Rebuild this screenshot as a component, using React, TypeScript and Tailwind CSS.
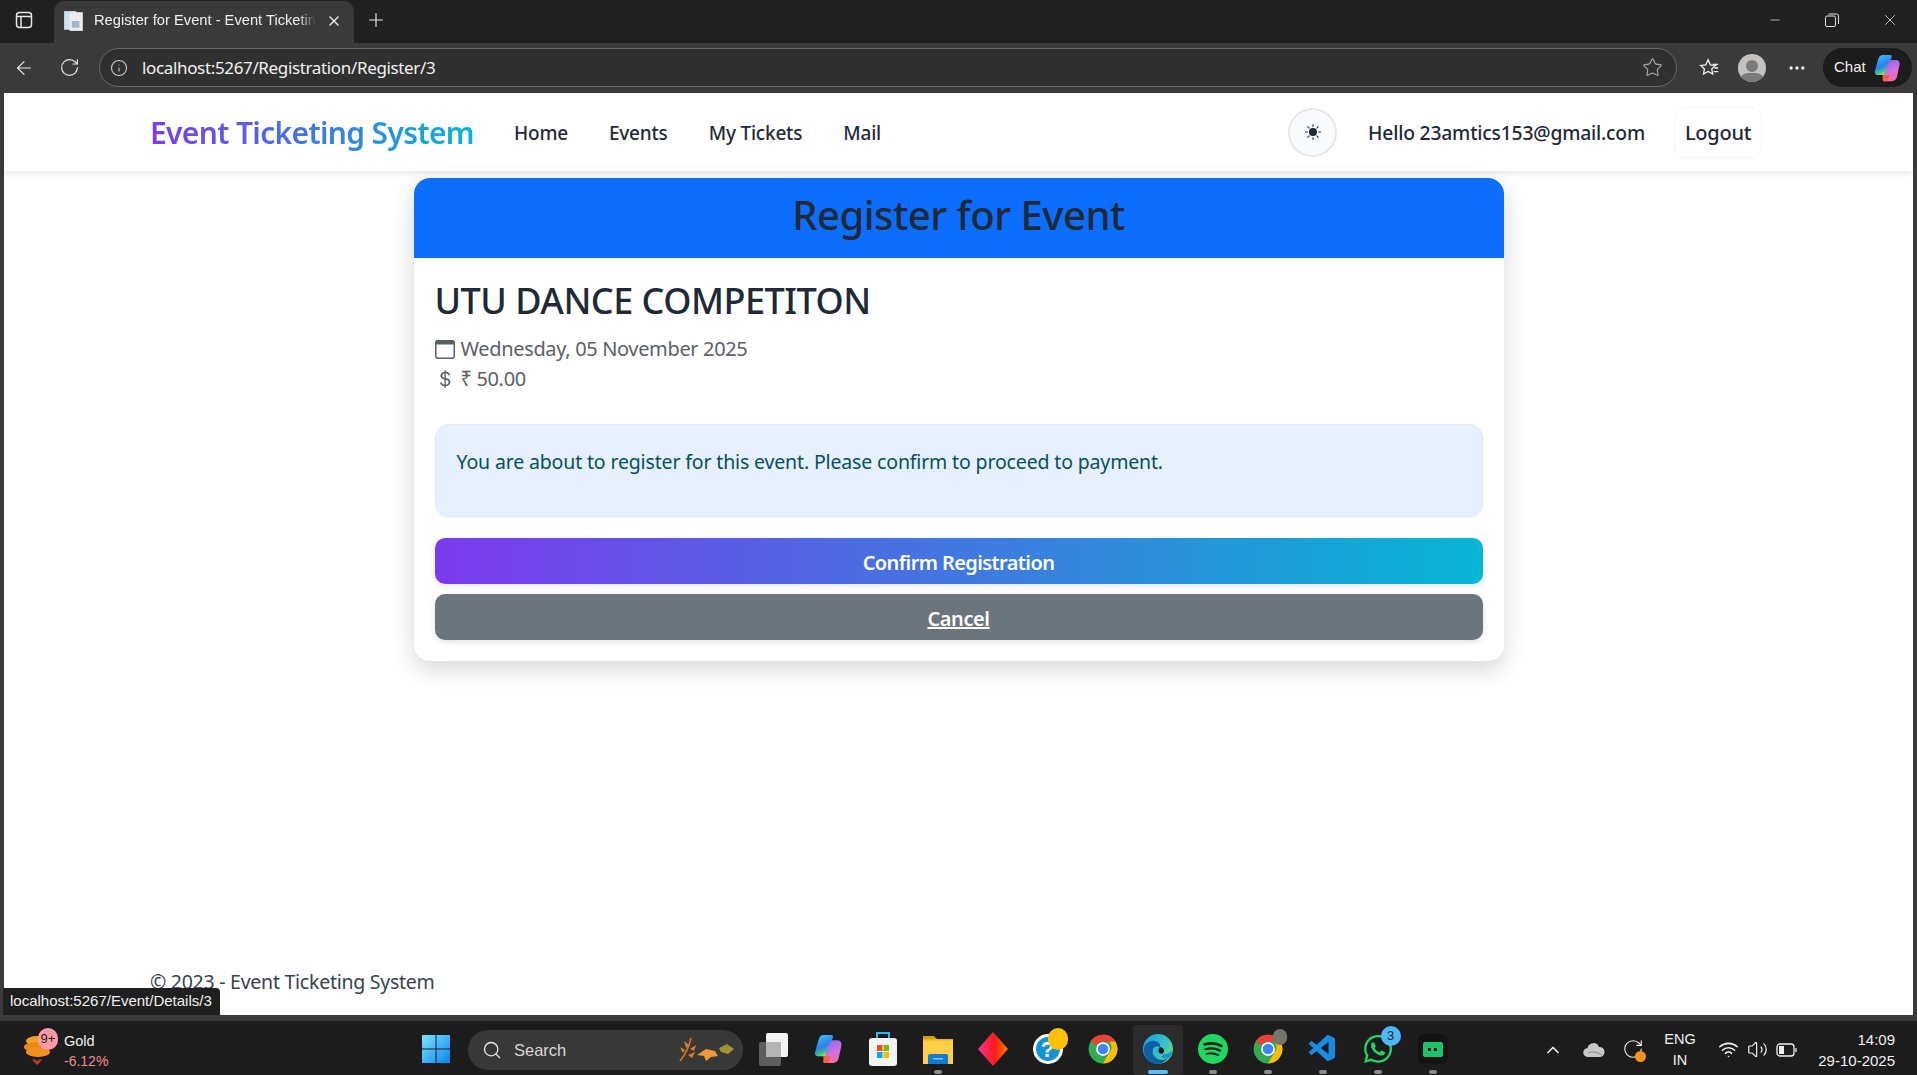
import React from 'react';
import { ArrowLeft, RotateCw, Info, Star, Plus, X, Minus, Search, ChevronUp, Wifi, Volume2, MoreHorizontal } from 'lucide-react';
import { BsCurrencyDollar, BsSunFill } from 'react-icons/bs';
import { FaWhatsapp } from 'react-icons/fa';
import { VscVscode } from 'react-icons/vsc';

const font = 'font-["Noto_Sans","Open_Sans",sans-serif]';

function CopilotIcon({ size = 26, id = 'cp' }: { size?: number; id?: string }) {
  return (
    <svg width={size} height={size} viewBox="0 0 24 24">
      <defs>
        <linearGradient id={`${id}A`} x1="0.2" y1="0" x2="0.6" y2="1">
          <stop offset="0" stopColor="#35c6f4" />
          <stop offset="0.55" stopColor="#2f7cf0" />
          <stop offset="0.8" stopColor="#37c58a" />
          <stop offset="1" stopColor="#f5d33c" />
        </linearGradient>
        <linearGradient id={`${id}B`} x1="0.3" y1="0" x2="0.7" y2="1">
          <stop offset="0" stopColor="#7c6cf0" />
          <stop offset="0.55" stopColor="#d86ee0" />
          <stop offset="1" stopColor="#f0709c" />
        </linearGradient>
      </defs>
      <path d="M8.500 1.500h6c1 0 1.500.7 1.200 1.700L12 15c-.6 1.800-1.500 2.500-3 2.500H4.500C2.800 17.500 1.800 16 2.300 14.300L5 5c.6-2.200 1.700-3.500 3.500-3.500z" fill={`url(#${id}A)`} />
      <path d="M15.500 5.500h3.500c2.200 0 3.400 1.600 3 3.800l-1.800 8.900c-.5 2.600-2 4.300-4.500 4.300h-6c-1 0-1.300-.8-1-1.700l3.500-11.300c.5-1.500.6-4 2.800-4z" fill={`url(#${id}B)`} />
      <path d="M8.500 17.500H14l-1.600 5h-2.800c-1 0-1.300-.8-1-1.700z" fill="#f5643c" />
    </svg>
  );
}

function ChromeIcon({ size = 30 }: { size?: number }) {
  return (
    <svg width={size} height={size} viewBox="0 0 48 48">
      <circle cx="24" cy="24" r="23" fill="#34a853" />
      <path d="M24 1a23 23 0 0 1 20 11.500H24a11.500 11.500 0 0 0-10 5.800L4.100 12.500A23 23 0 0 1 24 1z" fill="#ea4335" />
      <path d="M44 12.500A23 23 0 0 1 24 47l10-17.500a11.500 11.500 0 0 0 0-17z" fill="#fbbc04" />
      <circle cx="24" cy="24" r="11" fill="#fff" />
      <circle cx="24" cy="24" r="8.500" fill="#4285f4" />
    </svg>
  );
}

function EdgeIcon() {
  return (
    <svg width="32" height="32" viewBox="0 0 32 32">
      <defs>
        <linearGradient id="edA" x1="0" y1="0" x2="1" y2="0.6">
          <stop offset="0" stopColor="#1b9de2" />
          <stop offset="0.7" stopColor="#35c1c8" />
          <stop offset="1" stopColor="#6fdc6a" />
        </linearGradient>
      </defs>
      <circle cx="16" cy="16" r="15" fill="url(#edA)" />
      <path d="M2 15c1-5 6-8 11-7 4 .8 6 4 5 6-2-1.500-6-1-7 2-1.200 4 1 9 6 10.500 3 .9 6 .4 9-1.500-3 4-7 6-11 6C7 31 1 24 2 15z" fill="#0f5ea8" />
      <path d="M18 14c3 .5 5 3 3.500 5.500-1.500 2-4.500 1.500-5-1-.4-2 .5-3.500 1.500-4.500z" fill="#1b1b1b" />
      <path d="M21 21c3 .5 6-.5 9-4 .5 3-1 6-3 8-3 1-6 .5-8-1 1-.5 1.500-1.500 2-3z" fill="#1f8fe0" />
    </svg>
  );
}

function TaskIcon({ children, dot, active }: { children: React.ReactNode; dot?: boolean; active?: boolean }) {
  return (
    <div className="relative flex h-[50px] w-[55px] items-center justify-center pb-[2px]">
      {active && <div className="absolute inset-y-0 left-[3px] right-[2px] rounded-[4px] bg-[#2b2b2b]" />}
      <div className="relative flex items-center justify-center">{children}</div>
      {dot && <span className="absolute bottom-[1px] left-1/2 h-[4px] w-[8px] -translate-x-1/2 rounded-full bg-[#8a8a8a]" />}
      {active && <span className="absolute bottom-[1px] left-1/2 h-[4px] w-[20px] -translate-x-1/2 rounded-full bg-[#4cc2ff]" />}
    </div>
  );
}

function BrowserChrome() {
  return (
    <>
      <div className="flex h-[43px] bg-[#202020] text-white">
        <div className="flex h-[40px] w-[54px] items-center justify-center pr-[6px]">
          <svg width="18" height="18" viewBox="0 0 18 18" fill="none" stroke="#e8e8e8" strokeWidth="1.500">
            <rect x="1.500" y="1.500" width="15" height="15" rx="3" />
            <path d="M1.500 5.500h15M6 5.500v11" />
          </svg>
        </div>
        <div className="mt-[1px] flex h-[42px] w-[300px] items-center rounded-t-[10px] bg-[#3a3a3a] pb-[3px] pl-[9px] pr-[12px]">
          <svg width="22" height="22" viewBox="0 0 20 20" className="shrink-0">
            <rect x="1" y="1" width="11" height="17" fill="#cfe0ef" />
            <rect x="6" y="2" width="12" height="17" fill="#e9edf2" />
            <rect x="8" y="10" width="7" height="6" fill="#9fb6cc" />
          </svg>
          <span className="ml-[9px] whitespace-nowrap text-[14.700px] text-[#f0f0f0] font-['Liberation_Sans',sans-serif] [mask-image:linear-gradient(to_right,black_92%,transparent)]">
            Register for Event - Event Ticketin
          </span>
          <X size={16} className="ml-auto text-[#e8e8e8]" />
        </div>
        <div className="flex h-[40px] w-[44px] items-center justify-center">
          <Plus size={22} strokeWidth={1.3} className="text-[#e8e8e8]" />
        </div>
        <div className="ml-auto flex h-[40px] items-center text-[#e0e0e0]">
          <div className="flex w-[57px] justify-center"><Minus size={14} strokeWidth={1.3} /></div>
          <div className="flex w-[57px] justify-center">
            <svg width="14" height="14" viewBox="0 0 14 14" fill="none" stroke="#e0e0e0" strokeWidth="1">
              <rect x="0.500" y="3" width="10" height="10.500" rx="1.500" />
              <path d="M3.500 1h8a2 2 0 0 1 2 2v8" />
            </svg>
          </div>
          <div className="flex w-[57px] justify-center pl-[2px]"><X size={18} strokeWidth={1.1} /></div>
        </div>
      </div>
      <div className="flex h-[50px] items-center bg-[#3a3a3a] pb-[1px] text-[#e8e8e8]">
        <div className="flex w-[46px] justify-center pl-[1px]"><ArrowLeft size={22} strokeWidth={1.3} /></div>
        <div className="flex w-[46px] justify-center"><RotateCw size={21} strokeWidth={1.3} /></div>
        <div className="ml-[7px] flex h-[39px] w-[1578px] items-center rounded-full border border-[#6a6a6a] bg-[#303030] pl-[10px] pr-[13px]">
          <Info size={18} strokeWidth={1.4} className="text-[#d0d0d0]" />
          <span className={`ml-[14px] text-[17px] tracking-[-0.35px] text-[#f2f2f2] ${font}`}>localhost:5267/Registration/Register/3</span>
          <Star size={21} strokeWidth={1.2} className="ml-auto text-[#b0b0b0]" />
        </div>
        <div className="flex w-[61px] justify-center pl-[2px]">
          <svg width="22" height="22" viewBox="0 0 24 24" fill="none" stroke="#f0f0f0" strokeWidth="1.400">
            <path d="M11 3l2.500 5.500 5.500.7-4 3.800 1 5.500-5-2.800-5 2.800 1-5.500-4-3.800 5.500-.7z" />
            <path d="M16 8h6M18 12h4M17 16h5" />
          </svg>
        </div>
        <div className="relative h-[28px] w-[28px] overflow-hidden rounded-full bg-[#c4c3c0]">
          <div className="absolute left-1/2 top-[6px] h-[12px] w-[12px] -translate-x-1/2 rounded-full bg-[#7b7a78]" />
          <div className="absolute left-1/2 top-[19px] h-[16px] w-[24px] -translate-x-1/2 rounded-full bg-[#7b7a78]" />
        </div>
        <div className="flex w-[57px] justify-center pl-[4px]"><MoreHorizontal size={20} strokeWidth={2} className="text-[#f0f0f0]" /></div>
        <div className="flex h-[39px] w-[89px] items-center gap-[6px] rounded-full bg-[#1c1c1c] pl-[11px]">
          <span className="text-[15px] text-[#f0f0f0] font-['Liberation_Sans',sans-serif]">Chat</span>
          <CopilotIcon size={30} id="cpChat" />
        </div>
      </div>
    </>
  );
}

function NavBar() {
  return (
    <nav className="flex h-[78px] shrink-0 items-center bg-white pl-[146px] pr-[152px] shadow-[0_2px_6px_rgba(0,0,0,0.10)]">
      <span className="bg-[linear-gradient(to_right,#7c3aed,#06b6d4)] bg-clip-text text-[30px] font-semibold tracking-[-0.65px] text-transparent">
        Event Ticketing System
      </span>
      <div className="ml-[40px] mt-[2px] flex gap-[41px] text-[19px] font-medium tracking-[-0.2px] text-[#1f2937]">
        <span>Home</span>
        <span>Events</span>
        <span>My Tickets</span>
        <span>Mail</span>
      </div>
      <div className="ml-auto flex h-[49px] w-[49px] items-center justify-center rounded-full border-2 border-[#e5e7eb] bg-[#f9fafb] text-[#1f2937]">
        <BsSunFill size={16} />
      </div>
      <span className="ml-[31px] mt-[2px] text-[19.300px] font-medium tracking-[-0.2px] text-[#1f2937]">Hello 23amtics153@gmail.com</span>
      <div className="ml-[30px] flex h-[49px] w-[86px] items-center justify-center rounded-[10px] bg-white pt-[2px] text-[20px] font-medium tracking-[-0.25px] text-[#1f2937] shadow-[0_0_3px_rgba(0,0,0,0.07)]">
        Logout
      </div>
    </nav>
  );
}

function RegisterCard() {
  return (
    <div className="mx-auto mt-[7px] w-[1090px] overflow-hidden rounded-[16px] bg-white shadow-[0_8px_24px_rgba(0,0,0,0.16)]">
      <div className="flex h-[80px] items-center justify-center bg-[#0d6efd] pb-[7px] text-[40px] font-medium tracking-[-0.5px] text-[#1f2937]">
        Register for Event
      </div>
      <div className="px-[21px] pb-[21px] pt-[22px]">
        <h3 className="h-[42px] text-[36px] font-medium leading-[42px] tracking-[-0.5px] text-[#1f2937]">UTU DANCE COMPETITON</h3>
        <div className="mt-[12px] text-[20px] leading-[30px] tracking-[-0.35px] text-[#5b6167]">
          <div className="flex items-center">
            <svg width="20" height="20" viewBox="0 0 20 20" fill="none">
              <rect x="0.750" y="1.750" width="18.500" height="17.500" rx="2.200" stroke="currentColor" strokeWidth="1.500" />
              <path d="M3 1h14a2.500 2.500 0 0 1 2.500 2.500V5.500H.500V3.500A2.500 2.500 0 0 1 3 1z" fill="currentColor" />
            </svg>
            <span className="ml-[6px]">Wednesday, 05 November 2025</span>
          </div>
          <div className="flex items-center">
            <BsCurrencyDollar size={20} />
            <span className="ml-[6px]">₹ 50.00</span>
          </div>
        </div>
        <div className="mt-[30px] h-[93px] rounded-[14px] border border-[#dfe9f7] bg-[#e6f0fe] pl-[21px] pr-[20px] pt-[22px] text-[19.500px] leading-[30px] tracking-[-0.15px] text-[#055160] shadow-[0_1px_3px_rgba(0,0,0,0.05)]">
          You are about to register for this event. Please confirm to proceed to payment.
        </div>
        <button className="mt-[21px] flex h-[46px] w-full items-center justify-center rounded-[10px] bg-[linear-gradient(to_right,#7c3aed,#06b6d4)] pt-[4px] text-[20px] font-semibold tracking-[-0.6px] text-white shadow-[0_2px_6px_rgba(0,0,0,0.12)]">
          Confirm Registration
        </button>
        <button className="mt-[10px] flex h-[46px] w-full items-center justify-center rounded-[10px] bg-[#6c757d] pt-[4px] text-[20px] font-semibold tracking-[-0.4px] text-white underline shadow-[0_2px_6px_rgba(0,0,0,0.12)]">
          Cancel
        </button>
      </div>
    </div>
  );
}

function Taskbar() {
  return (
    <div className="flex h-[54px] items-end bg-[#1c1c1c] text-white">
      <div className="relative h-full w-[408px] shrink-0">
        <svg width="30" height="36" viewBox="0 0 30 36" className="absolute left-[22px] top-[12px]">
          <ellipse cx="15" cy="8" rx="11" ry="5" fill="#f0a12a" />
          <ellipse cx="14" cy="14" rx="12" ry="5" fill="#e8891a" />
          <ellipse cx="16" cy="19" rx="12" ry="5" fill="#f09020" />
          <path d="M10 27l5 5 5-5-2-1-3 2-3-2z" fill="#c0391b" />
        </svg>
        <span className="absolute left-[38px] top-[7px] flex h-[22px] w-[20px] items-center justify-center rounded-full bg-[#ff9aa2] text-[13px] text-[#1c1c1c] font-['Liberation_Sans',sans-serif]">9+</span>
        <span className="absolute left-[64px] top-[10px] text-[14.500px] text-[#f0f0f0] font-['Liberation_Sans',sans-serif]">Gold</span>
        <span className="absolute left-[64px] top-[30px] text-[14px] text-[#f28b92] font-['Liberation_Sans',sans-serif]">-6.12%</span>
      </div>
      <div className="flex h-[50px] w-[55px] items-center justify-center pb-[2px]">
        <svg width="30" height="30" viewBox="0 0 30 30">
          <defs>
            <linearGradient id="winA" x1="0" y1="0" x2="1" y2="1">
              <stop offset="0" stopColor="#7be3ff" />
              <stop offset="1" stopColor="#0a84f0" />
            </linearGradient>
          </defs>
          <path d="M1 1h13.500v13.500H1zM15.500 1H29v13.500H15.500zM1 15.500h13.500V29H1zM15.500 15.500H29V29H15.500z" fill="url(#winA)" />
        </svg>
      </div>
      <div className="mb-[5px] ml-[5px] flex h-[40px] w-[275px] items-center rounded-full bg-[#383838] pl-[14px] pr-[6px]">
        <Search size={20} strokeWidth={1.6} className="text-[#e8e8e8]" />
        <span className="ml-[12px] pt-[1px] text-[16.500px] text-[#d8d8d8] font-['Liberation_Sans',sans-serif]">Search</span>
        <svg width="60" height="30" viewBox="0 0 60 30" className="ml-auto">
          <path d="M3 26C8 20 12 12 14 3" stroke="#d87a24" strokeWidth="1.500" fill="none" />
          <path d="M6 18l-3-6 5 3zM9 13l-2-7 5 4zM13 14l6-4-2 6zM11 20l7-3-3 6z" fill="#e0812a" />
          <path d="M20 20l9-6 9 2 3 5-7 1-5 4-2-5z" fill="#ee9a3c" />
          <path d="M42 13l8-4 7 5-6 5-7-2z" fill="#9c9530" />
        </svg>
      </div>
      <div className="ml-[2px] flex">
        <TaskIcon>
          <svg width="30" height="34" viewBox="0 0 30 34">
            <rect x="1" y="10" width="22" height="24" rx="2" fill="#5e5e5e" />
            <rect x="8" y="1" width="22" height="24" rx="2" fill="#f2f2f2" />
            <rect x="8" y="10" width="15" height="15" fill="#b4b4b4" />
          </svg>
        </TaskIcon>
        <TaskIcon><CopilotIcon size={32} id="cpTask" /></TaskIcon>
        <TaskIcon>
          <svg width="30" height="34" viewBox="0 0 30 34">
            <path d="M9 6V1h12v5" stroke="#2fb6f0" strokeWidth="2" fill="none" />
            <rect x="1" y="6" width="28" height="28" rx="3" fill="#f4f4f4" />
            <rect x="9" y="13" width="5.500" height="6" fill="#f25022" />
            <rect x="15.500" y="13" width="5.500" height="6" fill="#7fba00" />
            <rect x="9" y="20" width="5.500" height="6" fill="#00a4ef" />
            <rect x="15.500" y="20" width="5.500" height="6" fill="#ffb900" />
          </svg>
        </TaskIcon>
        <TaskIcon dot>
          <svg width="32" height="30" viewBox="0 0 32 30">
            <path d="M1 2h11l3 3h-14z" fill="#d39c0a" />
            <rect x="1" y="5" width="30" height="25" fill="#ffcf4a" />
            <rect x="1" y="5" width="30" height="1.500" fill="#f7b500" />
            <path d="M6 22a2 2 0 0 1 2-2h16a2 2 0 0 1 2 2v8H6z" fill="#0f7cd0" />
            <rect x="11" y="24" width="10" height="1.500" fill="#7cc6f5" />
          </svg>
        </TaskIcon>
        <TaskIcon>
          <svg width="30" height="34" viewBox="0 0 30 34">
            <defs>
              <linearGradient id="dmA" x1="0" y1="0" x2="1" y2="0">
                <stop offset="0" stopColor="#f0359a" />
                <stop offset="0.55" stopColor="#ff1a1a" />
                <stop offset="1" stopColor="#ff7a00" />
              </linearGradient>
            </defs>
            <polygon points="15,0 30,17 15,34 0,17" fill="url(#dmA)" />
          </svg>
        </TaskIcon>
        <TaskIcon>
          <div className="relative flex h-[30px] w-[30px] items-center justify-center rounded-full border-[3px] border-white bg-[#1593cf] text-[22px] font-bold text-white font-['Liberation_Sans',sans-serif]">
            ?
            <span className="absolute -right-[8px] -top-[9px] h-[22px] w-[20px] rounded-full bg-[#fcbf0a]" />
          </div>
        </TaskIcon>
        <TaskIcon><ChromeIcon /></TaskIcon>
        <TaskIcon active><EdgeIcon /></TaskIcon>
        <TaskIcon dot>
          <svg width="30" height="30" viewBox="0 0 30 30" fill="none">
            <circle cx="15" cy="15" r="15" fill="#1ed760" />
            <path d="M6.500 10.500c6-1.800 12-1.200 17 1.500" stroke="#1c1c1c" strokeWidth="2.600" strokeLinecap="round" />
            <path d="M7.500 15.200c5-1.400 10-.9 14.500 1.400" stroke="#1c1c1c" strokeWidth="2.200" strokeLinecap="round" />
            <path d="M8.500 19.800c4-1 8-.7 11.500 1.200" stroke="#1c1c1c" strokeWidth="1.900" strokeLinecap="round" />
          </svg>
        </TaskIcon>
        <TaskIcon dot>
          <div className="relative">
            <ChromeIcon />
            <span className="absolute -right-[4px] -top-[5px] h-[16px] w-[14px] rounded-full bg-[#77736e]" />
          </div>
        </TaskIcon>
        <TaskIcon dot><VscVscode size={32} className="text-[#1a8ae6]" /></TaskIcon>
        <TaskIcon dot>
          <div className="relative">
            <FaWhatsapp size={32} className="text-[#25d366]" />
            <span className="absolute -right-[7px] -top-[7px] flex h-[20px] w-[20px] items-center justify-center rounded-full bg-[#4cb8f5] text-[13px] text-[#1c1c1c] font-['Liberation_Sans',sans-serif]">3</span>
          </div>
        </TaskIcon>
        <TaskIcon dot>
          <div className="flex h-[30px] w-[30px] items-center justify-center rounded-[6px] bg-[#141414]">
            <div className="flex h-[15px] w-[20px] items-center justify-center gap-[3px] rounded-[2px] bg-[#1fc16b]">
              <span className="h-[3px] w-[3px] bg-[#141414]" />
              <span className="h-[3px] w-[3px] bg-[#141414]" />
            </div>
          </div>
        </TaskIcon>
      </div>
      <div className="ml-[83px] flex h-full flex-1 items-center pr-[22px] pt-[3px] text-[#f0f0f0]">
        <ChevronUp size={20} strokeWidth={2} />
        <svg width="22" height="14" viewBox="0 0 22 14" className="ml-[20px]">
          <path d="M5 14a4.500 4.500 0 0 1-.5-9A6 6 0 0 1 16 4a5 5 0 0 1 1 10z" fill="#c8c8c8" />
          <path d="M5 10c5-2 9-1 14 2" stroke="#8a8a8a" fill="none" />
        </svg>
        <div className="relative ml-[17px] h-[24px] w-[24px]">
          <RotateCw size={22} strokeWidth={1.2} />
          <span className="absolute bottom-[0px] right-[0px] h-[11px] w-[11px] rounded-full bg-[#f7941d]" />
        </div>
        <div className="ml-[9px] w-[50px] text-center text-[14.500px] leading-[21px] font-['Liberation_Sans',sans-serif]">
          <div>ENG</div>
          <div>IN</div>
        </div>
        <Wifi size={21} strokeWidth={1.8} className="ml-[13px]" />
        <Volume2 size={21} strokeWidth={1.4} className="ml-[8px]" />
        <svg width="22" height="14" viewBox="0 0 22 14" fill="none" stroke="#f0f0f0" strokeWidth="1.300" className="ml-[8px]">
          <rect x="1" y="1" width="17" height="12" rx="3" />
          <rect x="3" y="3" width="5" height="8" fill="#f0f0f0" stroke="none" />
          <path d="M20 5v4" />
        </svg>
        <div className="ml-auto text-right text-[15px] leading-[21px] font-['Liberation_Sans',sans-serif]">
          <div>14:09</div>
          <div>29-10-2025</div>
        </div>
      </div>
    </div>
  );
}

export default function App() {
  return (
    <div className={`flex h-screen flex-col overflow-hidden bg-[#3a3a3a] ${font}`}>
      <BrowserChrome />
      <div className="relative mx-[4px] flex h-[922px] shrink-0 flex-col rounded-t-[10px] bg-white">
        <NavBar />
        <RegisterCard />
        <footer className="mt-auto pb-[18px] pl-[146px] text-[19.500px] leading-[30px] tracking-[-0.25px] text-[#374151]">
          © 2023 - Event Ticketing System
        </footer>
        <div className="absolute -left-[1px] bottom-0 flex h-[27px] w-[217px] items-center rounded-tr-[4px] bg-[#1f1f1f] pl-[7px] text-[15px] text-[#f0f0f0] font-['Liberation_Sans',sans-serif]">
          localhost:5267/Event/Details/3
        </div>
      </div>
      <div className="h-[6px] shrink-0" />
      <Taskbar />
    </div>
  );
}
